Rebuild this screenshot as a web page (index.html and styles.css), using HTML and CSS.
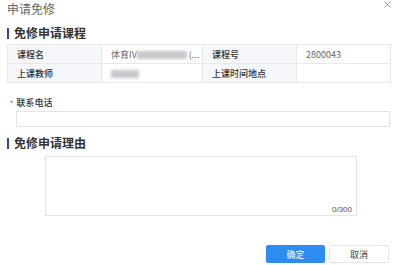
FILE: index.html
```html
<!DOCTYPE html>
<html lang="zh-CN">
<head>
  <meta charset="UTF-8" />
  <title>申请免修</title>
  <link rel="stylesheet" href="styles.css">
</head>
<body>

<div class="dialog">
  <div class="dialog-title">申请免修</div>
  <svg class="close" width="7" height="7" viewBox="0 0 7 7">
    <path d="M0.5 0.5 L6.5 6.5 M6.5 0.5 L0.5 6.5" stroke="#999" stroke-width="1" fill="none"/>
  </svg>

  <!-- 课程信息 -->
  <div class="section-head">免修申请课程</div>
  <table class="info-table">
    <tr>
      <td class="label">课程名</td>
      <td class="value">体育IV<span class="blur wide"></span>(...</td>
      <td class="label">课程号</td>
      <td class="value">2800043</td>
    </tr>
    <tr>
      <td class="label">上课教师</td>
      <td class="value"><span class="blur"></span></td>
      <td class="label">上课时间地点</td>
      <td class="value"></td>
    </tr>
  </table>

  <div class="field">
    <div class="field-label"><span class="req">*</span>联系电话</div>
    <div class="input"></div>
  </div>

  <!-- 理由 -->
  <div class="section-head second">免修申请理由</div>
  <div class="textarea">
    <span class="count">0/300</span>
  </div>

  <div class="actions">
    <button class="btn primary">确定</button>
    <button class="btn">取消</button>
  </div>
</div>

</body>
</html>
```
FILE: styles.css
```css
body {
  margin: 0;
  background: #fff;
  font-family: "Noto Sans CJK SC", "Noto Sans", sans-serif;
  color: #333;
}

.dialog {
  position: relative;
  padding: 0 6px 0 7px;
}

.dialog-title {
  height: 18px;
  line-height: 18px;
  font-size: 12px;
  color: #666;
}

.close {
  position: absolute;
  top: 1px;
  right: 5px;
}

.section-head {
  margin-top: 6px;
  height: 18px;
  line-height: 18px;
  font-size: 12px;
  font-weight: bold;
  color: #333;
  padding-left: 7px;
  position: relative;
}

.section-head::before {
  content: "";
  position: absolute;
  left: 0;
  top: 4px;
  width: 2px;
  height: 11px;
  background: #2f4a8f;
}

.section-head.second {
  margin-top: 7px;
}

.info-table {
  margin-top: 2px;
  width: 384px;
  border-collapse: collapse;
  font-size: 9px;
}

.info-table td {
  border: 1px solid #e6e8ec;
  height: 18px;
  padding: 0 0 0 9px;
}

.info-table .label {
  width: 84px;
  background: #f5f7fa;
  color: #333;
  font-weight: 500;
}

.info-table .value {
  color: #666;
}

.info-table td:nth-child(2) {
  width: 91px;
}

.blur {
  display: inline-block;
  width: 28px;
  height: 8px;
  background: #c8c8cc;
  filter: blur(1.5px);
  vertical-align: middle;
}

.blur.wide {
  width: 50px;
  margin-right: 2px;
}

.field {
  margin-top: 13px;
  padding-left: 9px;
}

.field-label {
  height: 14px;
  line-height: 14px;
  font-size: 9px;
  font-weight: 500;
  color: #333;
}

.req {
  color: #e04040;
  margin-left: -6px;
  margin-right: 3px;
  font-size: 7px;
}

.input {
  margin-top: 1px;
  width: 372px;
  height: 14px;
  border: 1px solid #e2e4e8;
}

.textarea {
  position: relative;
  margin: 4px 0 0 38px;
  width: 310px;
  height: 58px;
  border: 1px solid #e2e4e8;
}

.count {
  position: absolute;
  right: 4px;
  bottom: 1px;
  font-size: 8px;
  color: #555;
  font-family: "Liberation Sans", sans-serif;
}

.actions {
  margin-top: 29px;
  display: flex;
  justify-content: flex-end;
  gap: 4px;
  padding-right: 1px;
}

.btn {
  width: 60px;
  height: 18px;
  padding: 0;
  border: 1px solid #e4e6ea;
  border-radius: 2px;
  background: #fff;
  color: #444;
  font-family: inherit;
  font-size: 9px;
  box-shadow: 0 1px 2px rgba(0,0,0,0.08);
}

.btn.primary {
  width: 59px;
  background: #2d8cf0;
  border-color: #2d8cf0;
  color: #fff;
}
```
